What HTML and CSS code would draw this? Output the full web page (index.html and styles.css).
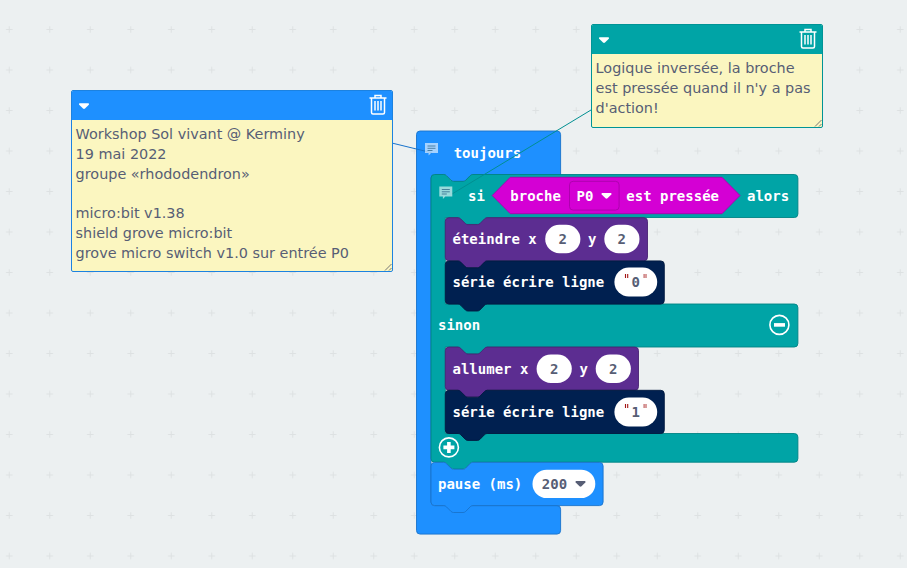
FILE: index.html
```html
<!DOCTYPE html>
<html lang="fr">
<head>
<meta charset="utf-8">
<title>Blocs micro:bit</title>
<link rel="stylesheet" href="styles.css">
</head>
<body>
<main class="workspace">
<svg class="blocks" width="907" height="568" viewBox="0 0 907 568">
  <defs>
    <pattern id="grid" x="-11" y="9.25" width="40.5" height="40.5" patternUnits="userSpaceOnUse">
      <path class="grid-mark" d="M17 20.25h6.5M20.25 17v6.5"/>
    </pattern>
    <g id="note">
      <path d="M0 0h13v10h-7l-2.4 2.4v-2.4H0z" fill="#fff" opacity=".6"/>
      <path class="note-lines" d="M2.500 3h8M2.500 5.300h8M2.500 7.500h5"/>
    </g>
    <path id="caret" d="M-4.500-2.800h9q1 .5.3 1.500L1 2.600q-1 .8-2 0L-4.800-1.300q-.7-1 .3-1.500z"/>
  </defs>
  <rect width="907" height="568" fill="url(#grid)"/>

  <path class="block loop" d="M416.500 134.600q0-3.600 3.600-3.600H557q3.600 0 3.600 3.600V174.500H472.800q-1.500 0-2.600 1.200l-4.600 4.700q-1 1-2.500 1H453.600q-1.500 0-2.500-1l-4.700-4.700q-1.100-1.200-2.600-1.200H434.600q-3.600 0-3.600 3.600V502q0 3.600 3.600 3.600H557q3.600 0 3.600 3.600V530.500q0 3.600-3.600 3.600H420.100q-3.600 0-3.600-3.600z"/>
  <path class="block logic" d="M431 178.100q0-3.600 3.600-3.600h9.200q1.500 0 2.600 1.200l4.700 4.700q1 1 2.500 1h9.500q1.500 0 2.500-1l4.600-4.700q1.100-1.200 2.600-1.200H794.300q3.600 0 3.600 3.600V213.900q0 3.600-3.600 3.600H487.100l-7.200 6.900H465.400l-7.300-6.900H445.300V304H794.300q3.600 0 3.600 3.600V343.400q0 3.600-3.600 3.600H487.100l-7.200 6.900H465.400l-7.300-6.900H445.300V433.500H794.300q3.600 0 3.600 3.600V458.600q0 3.600-3.600 3.600H472.800q-1.500 0-2.600 1.200l-4.600 4.700q-1 1-2.500 1H453.600q-1.500 0-2.500-1l-4.700-4.700q-1.100-1.200-2.600-1.200H434.600q-3.600 0-3.600-3.600z"/>

  <path class="block led" d="M445.300 221.300q0-3.600 3.600-3.600h9.200q1.500 0 2.600 1.200l4.700 4.700q1 1 2.500 1h9.500q1.500 0 2.500-1l4.600-4.700q1.100-1.200 2.600-1.200H643.900q3.600 0 3.600 3.600V257.200q0 3.600-3.600 3.600H487.100l-7.200 6.900H465.400l-7.300-6.900H448.900q-3.600 0-3.600-3.600z"/>
  <path class="block serial" d="M445.300 264.500q0-3.600 3.600-3.600h9.200q1.500 0 2.600 1.200l4.700 4.700q1 1 2.500 1h9.500q1.500 0 2.500-1l4.600-4.700q1.100-1.200 2.600-1.200H660.700q3.600 0 3.600 3.600V300.500q0 3.600-3.600 3.600H487.100q-1.500 0-2.600 1.200l-4.600 4.700q-1 1-2.500 1h-9.500q-1.500 0-2.500-1l-4.700-4.700q-1.100-1.200-2.600-1.200h-9.200q-3.600 0-3.600-3.600z"/>
  <path class="block led" d="M445.300 350.700q0-3.600 3.600-3.600h9.200q1.500 0 2.600 1.200l4.700 4.700q1 1 2.500 1h9.500q1.500 0 2.500-1l4.600-4.700q1.100-1.200 2.600-1.200H634.900q3.600 0 3.600 3.600V386.600q0 3.600-3.600 3.600H487.100l-7.200 6.900H465.400l-7.300-6.900H448.900q-3.600 0-3.600-3.600z"/>
  <path class="block serial" d="M445.300 393.900q0-3.600 3.600-3.600h9.200q1.500 0 2.600 1.200l4.700 4.700q1 1 2.500 1h9.500q1.500 0 2.500-1l4.600-4.700q1.100-1.200 2.600-1.200H660.700q3.600 0 3.600 3.600V429.900q0 3.600-3.600 3.600H487.100q-1.500 0-2.600 1.200l-4.600 4.700q-1 1-2.500 1h-9.500q-1.500 0-2.500-1l-4.700-4.700q-1.100-1.200-2.600-1.200h-9.200q-3.600 0-3.600-3.600z"/>
  <path class="block loop" d="M431 466q0-3.600 3.600-3.600h9.200q1.500 0 2.600 1.200l4.700 4.700q1 1 2.500 1h9.500q1.500 0 2.500-1l4.600-4.700q1.100-1.200 2.600-1.200H599.500q3.600 0 3.600 3.600V502q0 3.600-3.600 3.600H472.800q-1.500 0-2.600 1.200l-4.600 4.700q-1 1-2.500 1h-9.500q-1.500 0-2.500-1l-4.700-4.700q-1.100-1.200-2.600-1.200h-9.200q-3.600 0-3.600-3.600z"/>

  <path class="block pin" d="M510.300 177.300H722L740 195.500 722 213.700H510.300L492.200 195.500z"/>
  <rect class="block pin" x="569.500" y="181.300" width="49.600" height="28.800" rx="3.600"/>

  <g class="field">
    <rect x="545.200" y="224.800" width="35.200" height="28.400" rx="14.200"/>
    <rect x="604.300" y="224.800" width="35.200" height="28.400" rx="14.200"/>
    <rect x="614.400" y="267.600" width="42.800" height="29" rx="14.500"/>
    <rect x="536.600" y="354.500" width="35.200" height="28.400" rx="14.200"/>
    <rect x="595.700" y="354.500" width="35.200" height="28.400" rx="14.200"/>
    <rect x="614.400" y="397.400" width="42.800" height="29" rx="14.500"/>
    <rect x="532.500" y="469.700" width="62.800" height="28.400" rx="14.200"/>
  </g>

  <g class="label">
    <text x="453.700" y="158">toujours</text>
    <text x="468" y="201">si</text>
    <text x="510.300" y="201">broche</text>
    <text x="576.500" y="201">P0</text>
    <text x="626.300" y="201">est pressée</text>
    <text x="747" y="201">alors</text>
    <text x="452.500" y="244">éteindre x</text>
    <text x="588" y="244">y</text>
    <text x="452.500" y="287">série écrire ligne</text>
    <text x="438" y="330">sinon</text>
    <text x="452.500" y="374">allumer x</text>
    <text x="579.500" y="374">y</text>
    <text x="452.500" y="417">série écrire ligne</text>
    <text x="438" y="489">pause (ms)</text>
  </g>
  <g class="label value">
    <text x="558.500" y="244">2</text>
    <text x="617.600" y="244">2</text>
    <text x="631.500" y="287">0</text>
    <text x="549.900" y="374">2</text>
    <text x="609" y="374">2</text>
    <text x="631.500" y="417">1</text>
    <text x="541.800" y="489">200</text>
  </g>
  <path class="quote" d="M625.500 274v4M627.700 274v4M625.500 404v4M627.700 404v4"/>
  <path class="quote soft" d="M644.100 274v4M646 274v4M644.100 404v4M646 404v4"/>
  <use href="#caret" x="606.500" y="195.700" fill="#fff"/>
  <use href="#caret" x="580.500" y="483.700" fill="#575e75"/>

  <g class="toggle">
    <circle cx="779.400" cy="324.900" r="9.500"/>
    <path d="M774 324.900h11"/>
    <circle cx="448.900" cy="447.400" r="9.500"/>
    <path d="M443.400 447.400h11M448.900 441.900v11"/>
  </g>

  <path class="wire blue" d="M393 143.300L432 152.800"/>
  <path class="wire teal" d="M591 110L452 194"/>
  <use href="#note" x="425" y="143"/>
  <use href="#note" x="439.300" y="186.500"/>
</svg>

<section class="comment comment-blue">
  <header class="bar">
    <svg width="12" height="8" viewBox="-6 -4 12 8"><use href="#caret" fill="#fff"/></svg>
    <svg class="trash" width="18" height="22" viewBox="0 0 18 22"><path d="M.5 4H17.500M2.500 4V18.500q0 1.500 1.500 1.500H14q1.500 0 1.500-1.500V4M6 3.500V1.500H12V3.500M6 7V16.500M9 7V16.500M12 7V16.500"/></svg>
  </header>
  <p class="text">Workshop Sol vivant @ Kerminy
19 mai 2022
groupe «rhododendron»

micro:bit v1.38
shield grove micro:bit
grove micro switch v1.0 sur entrée P0</p>
  <svg class="grip" width="8" height="8"><path d="M1 7.500L7.500 1M5 7.500L7.500 5"/></svg>
</section>

<section class="comment comment-teal">
  <header class="bar">
    <svg width="12" height="8" viewBox="-6 -4 12 8"><use href="#caret" fill="#fff"/></svg>
    <svg class="trash" width="18" height="22" viewBox="0 0 18 22"><path d="M.5 4H17.500M2.500 4V18.500q0 1.500 1.500 1.500H14q1.500 0 1.500-1.500V4M6 3.500V1.500H12V3.500M6 7V16.500M9 7V16.500M12 7V16.500"/></svg>
  </header>
  <p class="text">Logique inversée, la broche
est pressée quand il n'y a pas
d'action!</p>
  <svg class="grip" width="8" height="8"><path d="M1 7.500L7.500 1M5 7.500L7.500 5"/></svg>
</section>
</main>
</body>
</html>
```
FILE: styles.css
```css
* { box-sizing: border-box; }
body { margin: 0; background: #ecf0f1; }
.workspace { position: relative; width: 907px; height: 568px; overflow: hidden; }
.blocks { display: block; }
.grid-mark { stroke: #dde1e2; stroke-width: 1; fill: none; }

.block { stroke-width: 0.9; }
.loop { fill: #1e90ff; stroke: #1873cc; }
.logic { fill: #00a4a6; stroke: #008385; }
.led { fill: #5c2d91; stroke: #4a2474; }
.serial { fill: #002050; stroke: #001a40; }
.pin { fill: #d400d4; stroke: #aa00aa; }
.field { fill: #fff; }

.label { font: bold 14px "DejaVu Sans Mono", monospace; fill: #fff; white-space: pre; }
.value { fill: #575e75; }
.quote { stroke: #a31515; stroke-width: 1.1; fill: none; }
.soft { opacity: 0.75; }
.toggle { fill: none; stroke: #fff; }
.toggle circle { stroke-width: 1.6; }
.toggle path { stroke-width: 3.6; }
.note-lines { stroke: #2c6485; stroke-width: 1; opacity: 0.75; fill: none; }
.wire { fill: none; stroke-width: 1; }
.blue { stroke: #1873cc; }
.teal { stroke: #008f91; }

.comment {
  position: absolute;
  border: 1px solid;
  border-radius: 2px;
  background: #fbf6c0;
  overflow: hidden;
}
.comment-blue { left: 71px; top: 90px; width: 322px; height: 182px; border-color: #1c82e0; }
.comment-teal { left: 591px; top: 24px; width: 232px; height: 104px; border-color: #009496; }
.comment-blue .bar { background: #1e90ff; padding-left: 5.500px; }
.comment-teal .bar { background: #00a4a6; }
.bar {
  height: 29px;
  display: flex;
  align-items: center;
  justify-content: space-between;
  padding: 1px 5.500px 0 6px;
}
.trash { fill: none; stroke: #fff; stroke-width: 1.5; margin-top: -3px; }
.text {
  margin: 0;
  padding: 5px 3.600px;
  font: 14.400px/19.850px "DejaVu Sans", sans-serif;
  color: #575e75;
  white-space: pre;
}
.grip { position: absolute; right: 0; bottom: 0; stroke: #777; stroke-width: 1; fill: none; }
```
